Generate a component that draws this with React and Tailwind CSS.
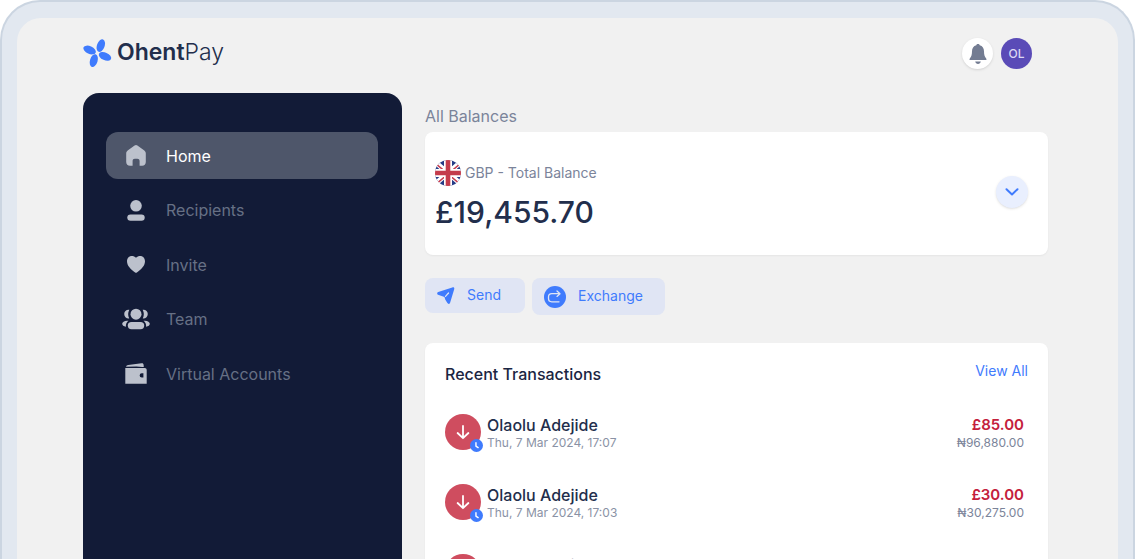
import React from "react";

const navItems = [
  { label: "Home", icon: HomeIcon, active: true },
  { label: "Recipients", icon: PersonIcon },
  { label: "Invite", icon: HeartIcon },
  { label: "Team", icon: TeamIcon },
  { label: "Virtual Accounts", icon: WalletIcon },
];

const transactions = [
  { name: "Olaolu Adejide", date: "Thu, 7 Mar 2024, 17:07", amount: "£85.00", local: "₦96,880.00" },
  { name: "Olaolu Adejide", date: "Thu, 7 Mar 2024, 17:03", amount: "£30.00", local: "₦30,275.00" },
  { name: "Olaolu Adejide", date: "Thu, 7 Mar 2024, 16:58", amount: "£254.00", local: "₦257,245.00" },
];

function LogoMark() {
  return (
    <svg width="30" height="30" viewBox="1 1 30 30" fill="#3f7bfd" aria-hidden="true">
      <ellipse cx="18.8" cy="7.6" rx="3.8" ry="6.6" transform="rotate(20 18.8 7.6)" />
      <ellipse cx="23" cy="18.4" rx="3.8" ry="6.600" transform="rotate(-66 23 18.4)" />
      <ellipse cx="11.8" cy="22.6" rx="3.8" ry="6.6" transform="rotate(17 11.8 22.6)" />
      <ellipse cx="7.6" cy="12" rx="3.8" ry="6.6" transform="rotate(-66 7.6 12)" />
    </svg>
  );
}

function BellIcon() {
  return (
    <svg width="18" height="20" viewBox="0 0 18 20" fill="#737c92" aria-hidden="true">
      <path d="M9 0c1 0 1.500.6 1.700 1.200C13.600 2 15 4.300 15 7.200c0 3.600.6 5.200 2.200 7.200.6.900.3 1.600-.6 1.600H1.400c-.9 0-1.200-.7-.6-1.600C2.400 12.400 3 10.800 3 7.200 3 4.300 4.400 2 7.300 1.200 7.500.6 8 0 9 0z" />
      <path d="M6.200 17.500h5.600C11.500 19 10.400 20 9 20s-2.500-1-2.800-2.500z" />
    </svg>
  );
}

function HomeIcon() {
  return (
    <svg width="20" height="21" viewBox="0 0 20 21" fill="currentColor" aria-hidden="true">
      <path d="M8.600.6a2.200 2.200 0 0 1 2.800 0l6.600 4.600c1.200.8 1.800 1.900 1.800 3.300V17c0 2.200-1.500 3.700-3.600 3.700h-2.600v-4.600c0-1.600-1-2.300-2.200-2.300H8.800c-1.300 0-2.200.7-2.200 2.300v4.600H4C1.700 20.700.2 19.200.2 17V8.500c0-1.400.6-2.500 1.800-3.300z" />
    </svg>
  );
}

function PersonIcon() {
  return (
    <svg width="18" height="21" viewBox="0 0 18 21" fill="currentColor" aria-hidden="true">
      <circle cx="9" cy="5.800" r="5.800" />
      <rect x="0.300" y="14.400" width="17.400" height="6.400" rx="3.200" />
    </svg>
  );
}

function HeartIcon() {
  return (
    <svg width="18" height="17" viewBox="0 0 18 17" fill="currentColor" aria-hidden="true">
      <path d="M9 1.800C10.200.5 11.600 0 13.200 0 16 0 18 2.200 18 5.300c0 4.200-3.700 8.400-8.100 11.100-.6.4-1.200.4-1.800 0C3.700 13.700 0 9.500 0 5.300 0 2.200 2 0 4.800 0 6.400 0 7.800.5 9 1.800z" />
    </svg>
  );
}

function TeamIcon() {
  return (
    <svg width="29" height="22" viewBox="0 0 29 22" fill="currentColor" aria-hidden="true">
      <circle cx="14.500" cy="6" r="5.700" />
      <rect x="6" y="14" width="17" height="7.600" rx="3.800" />
      <path d="M7.600 1.500C4.800 1 2.300 3 2.300 5.900c0 2.800 2.200 4.900 5.200 4.600C6 7.600 6 4.400 7.600 1.500z" />
      <path d="M21.400 1.500c2.800-.5 5.300 1.500 5.300 4.400 0 2.800-2.200 4.900-5.200 4.600 1.500-2.900 1.500-6.100-.1-9z" />
      <path d="M6.700 12.800C3 12.300.2 13.800.2 16c0 1.700 1.500 2.800 3.900 3-.4-2.600.5-4.600 2.600-6.200z" />
      <path d="M22.300 12.800c3.700-.5 6.500 1 6.500 3.200 0 1.700-1.500 2.800-3.900 3 .4-2.600-.5-4.600-2.600-6.200z" />
    </svg>
  );
}

function WalletIcon() {
  return (
    <svg width="22" height="21" viewBox="0 0 22 21" fill="currentColor" aria-hidden="true">
      <path d="M1 3.800C1.300 2.700 2 2.100 3.200 1.900L16.500.2c1.300-.2 2 .4 2.100 1.500l.2 2.200-1.500.1-6-.6z" />
      <path
        fillRule="evenodd"
        d="M.3 4.900h19.400c1.200 0 2 .8 2 2v13.900H.3zM16.800 10.300a2.100 2.100 0 1 0 0 4.300h1.600v-4.300z"
      />
    </svg>
  );
}

function FlagIcon() {
  return (
    <svg width="26" height="26" viewBox="0 0 26 26" aria-hidden="true">
      <clipPath id="flag-circle">
        <circle cx="13" cy="13" r="13" />
      </clipPath>
      <g clipPath="url(#flag-circle)">
        <path fill="#253b86" d="M0 0h26v26H0z" />
        <path stroke="#fff" strokeWidth="5" d="M0 2l26 22M26 2L0 24" />
        <path stroke="#c63a4c" strokeWidth="1.600" d="M0 3l26 22M26 3L0 25" />
        <path stroke="#fff" strokeWidth="8" d="M13 0v26M0 13h26" />
        <path stroke="#c43c4c" strokeWidth="4.600" d="M13 0v26M0 13h26" />
      </g>
    </svg>
  );
}

function SendIcon() {
  return (
    <svg width="18" height="17" viewBox="0 0 18 17" aria-hidden="true">
      <path
        fill="#3f7bfd"
        d="M1.200 5.100L15.300.4c1.500-.4 2.300.4 1.900 1.800L13.100 15.700c-.5 1.400-1.900 1.600-2.700.4L8.200 12.500 7.500 10 1 7.800C-.2 7.200-.1 5.600 1.200 5.100z"
      />
      <path stroke="#e0e5f4" strokeWidth="1.200" strokeLinecap="round" d="M8.500 9.300l3-3.300" />
    </svg>
  );
}

function ExchangeIcon() {
  return (
    <svg width="22" height="22" viewBox="0 0 22 22" fill="none" aria-hidden="true">
      <circle cx="11" cy="11" r="11" fill="#3f7bfd" />
      <path
        stroke="#e0e5f4"
        strokeWidth="1.300"
        strokeLinecap="round"
        strokeLinejoin="round"
        d="M13 5l3 2.700-3 2.700M16 7.700H7.800c-2 0-3.300 1.200-3.300 3.200v1.700c0 2 1.300 3.200 3.300 3.200H15"
      />
    </svg>
  );
}

function TransactionIcon() {
  return (
    <span className="relative size-9 shrink-0 rounded-full bg-[#cf4d5f]">
      <svg className="size-9" viewBox="0 0 36 36" fill="none" aria-hidden="true">
        <path
          stroke="#fff"
          strokeWidth="1.800"
          strokeLinecap="round"
          strokeLinejoin="round"
          d="M18 12v12M12.600 19L18 24.200l5.400-5.200"
        />
      </svg>
      <svg className="absolute -right-0.5 -bottom-0.5 size-[13px]" viewBox="0 0 12 12" fill="none" aria-hidden="true">
        <circle cx="6" cy="6" r="6" fill="#3f7bfd" />
        <path stroke="#fff" strokeWidth="1.300" strokeLinecap="round" d="M5.500 3.500v3l2 1.400" />
      </svg>
    </span>
  );
}

function Header() {
  return (
    <header className="flex h-[75px] items-start justify-between pt-5 pr-4">
      <a href="#" className="flex items-center gap-1 text-[23px] leading-7 text-[#222e4c]">
        <LogoMark />
        <span className="pb-1">
          <span className="font-semibold">Ohent</span>
          <span className="font-light">Pay</span>
        </span>
      </a>
      <div className="flex gap-2">
        <button
          aria-label="Notifications"
          className="flex size-[31px] items-center justify-center rounded-full bg-white shadow-sm"
        >
          <BellIcon />
        </button>
        <button className="size-[31px] rounded-full bg-[#5a4bb7] text-xs font-medium text-[#dcd8f3]">OL</button>
      </div>
    </header>
  );
}

function Sidebar() {
  return (
    <aside className="w-[319px] shrink-0 rounded-t-2xl bg-[#121b37] pt-[39px] pr-6 pl-[23px]">
      <nav className="flex h-[265px] flex-col justify-between">
        {navItems.map(({ label, icon: Icon, active }) => (
          <a
            key={label}
            href="#"
            className={`flex h-[47px] items-center gap-4 rounded-xl pl-4 text-base ${
              active ? "bg-[#4e566a] text-white" : "text-[#667085]"
            }`}
          >
            <span className="flex w-7 justify-center text-[#bcc1cc]">
              <Icon />
            </span>
            {label}
          </a>
        ))}
      </nav>
    </aside>
  );
}

function BalanceCard() {
  return (
    <section className="flex h-[123px] items-start justify-between rounded-lg bg-white pt-7 pr-5 pl-2.5 shadow-xs">
      <div>
        <div className="flex items-center gap-1 text-sm text-[#7b849a]">
          <FlagIcon />
          GBP - Total Balance
        </div>
        <p className="mt-2 text-[30px] leading-9 font-medium text-[#222e4c]">£19,455.70</p>
      </div>
      <button
        aria-label="Show balances"
        className="mt-4 flex size-8 items-center justify-center rounded-full bg-[#e9effe] shadow-sm"
      >
        <svg width="14" height="8" viewBox="0 0 14 8" fill="none" aria-hidden="true">
          <path stroke="#3f7bfd" strokeWidth="2" strokeLinecap="round" strokeLinejoin="round" d="M1.500 1.200L7 6.500l5.500-5.300" />
        </svg>
      </button>
    </section>
  );
}

function Transactions() {
  return (
    <section className="mt-7 rounded-lg bg-white px-5 pt-5 pb-6 shadow-xs">
      <div className="flex justify-between">
        <h2 className="text-base leading-[22px] font-medium text-[#1b2542]">Recent Transactions</h2>
        <a href="#" className="text-sm leading-4 text-[#3f7bfd]">
          View All
        </a>
      </div>
      <ul className="mt-[29px] flex flex-col gap-[34px] pr-1">
        {transactions.map((t) => (
          <li key={t.date} className="flex h-9 items-center gap-1.5">
            <TransactionIcon />
            <div className="flex-1 pt-px">
              <p className="text-base leading-5 font-medium text-[#222e4c]">{t.name}</p>
              <p className="text-xs leading-4 text-[#8a92a5]">{t.date}</p>
            </div>
            <div className="pt-px text-right">
              <p className="text-[15px] leading-5 font-semibold text-[#c4203c]">{t.amount}</p>
              <p className="text-xs leading-4 text-[#7b849a]">{t.local}</p>
            </div>
          </li>
        ))}
      </ul>
    </section>
  );
}

export default function App() {
  return (
    <div className="h-screen overflow-hidden bg-white font-['Inter',sans-serif]">
      <div className="flex h-full flex-col rounded-t-[40px] border-2 border-b-0 border-[#cbd5e1] bg-[#e2e8f0] px-[15px] pt-4">
        <div className="flex min-h-0 flex-1 flex-col rounded-t-3xl bg-[#f1f1f1] pr-[70px] pl-[66px]">
          <Header />
          <div className="flex min-h-0 flex-1 gap-[23px]">
            <Sidebar />
            <main className="min-w-0 flex-1">
              <h1 className="pt-3 pb-[5px] text-base leading-[22px] text-[#7b849a]">All Balances</h1>
              <BalanceCard />
              <div className="mt-[23px] flex items-start gap-[7px] text-sm text-[#3f7bfd]">
                <button className="flex h-[35px] items-center gap-3 rounded-lg bg-[#e0e5f4] pr-6 pl-3">
                  <SendIcon />
                  <span className="pb-0.5">Send</span>
                </button>
                <button className="flex h-[37px] items-center gap-3 rounded-lg bg-[#e0e5f4] pr-[22px] pl-3">
                  <ExchangeIcon />
                  <span className="pb-0.5">Exchange</span>
                </button>
              </div>
              <Transactions />
            </main>
          </div>
        </div>
      </div>
    </div>
  );
}
